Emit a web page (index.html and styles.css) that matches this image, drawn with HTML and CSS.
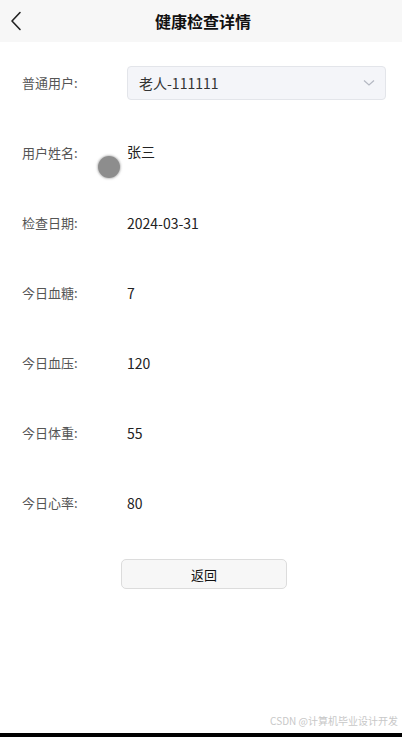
FILE: index.html
```html
<!DOCTYPE html>
<html lang="zh">
<head>
<meta charset="utf-8">
<link rel="stylesheet" href="styles.css">
</head>
<body>
<div class="page">
  <header class="nav">
    <svg class="back" width="12" height="20" viewBox="0 0 12 20"><path d="M10 1.5 L2 10 L10 18.5" fill="none" stroke="#222" stroke-width="1.6" stroke-linecap="round" stroke-linejoin="round"/></svg>
    <h1 class="title">健康检查详情</h1>
  </header>
  <main class="form">
    <div class="row">
      <span class="label">普通用户:</span>
      <div class="select"><span>老人-111111</span>
        <svg width="12" height="8" viewBox="0 0 12 8"><path d="M1 1.5 L6 6 L11 1.5" fill="none" stroke="#b4b8c2" stroke-width="1.2"/></svg>
      </div>
    </div>
    <div class="row"><span class="label">用户姓名:</span><span class="value up">张三</span></div>
    <div class="row"><span class="label">检查日期:</span><span class="value">2024-03-31</span></div>
    <div class="row"><span class="label">今日血糖:</span><span class="value">7</span></div>
    <div class="row"><span class="label">今日血压:</span><span class="value">120</span></div>
    <div class="row"><span class="label">今日体重:</span><span class="value">55</span></div>
    <div class="row"><span class="label">今日心率:</span><span class="value">80</span></div>
    <div class="actions"><button class="btn">返回</button></div>
  </main>
  <div class="watermark">CSDN @计算机毕业设计开发</div>
  <div class="touch"></div>
</div>
</body>
</html>
```
FILE: styles.css
```css
* { box-sizing: border-box; }
html, body { margin: 0; padding: 0; }
body {
  font-family: "Noto Sans CJK SC", "Noto Sans", sans-serif;
  background: #fff;
  color: #222;
}
.page {
  position: relative;
  width: 402px;
  height: 737px;
  border-bottom: 4px solid #000;
  overflow: hidden;
  display: flex;
  flex-direction: column;
}
.nav {
  height: 42px;
  background: #f7f7f7;
  display: flex;
  align-items: center;
  justify-content: center;
  position: relative;
}
.back { position: absolute; left: 10px; top: 11px; }
.title {
  margin: 0 0 0 4px;
  font-size: 16px;
  font-weight: 700;
  color: #111;
  line-height: 1;
}
.form {
  display: flex;
  flex-direction: column;
  padding: 24px 16px 0 22px;
}
.row {
  height: 70px;
  display: flex;
  align-items: flex-start;
}
.label {
  width: 105px;
  font-size: 13px;
  color: #555;
  line-height: 34px;
}
.value {
  font-size: 14px;
  color: #222;
  line-height: 34px;
}
.value.up { line-height: 30px; }
.select {
  width: 259px;
  height: 34px;
  background: #f4f5f9;
  border: 1px solid #e3e5ea;
  border-radius: 4px;
  display: flex;
  align-items: center;
  justify-content: space-between;
  padding: 0 10px 0 11px;
  font-size: 14px;
  color: #333;
}
.actions {
  display: flex;
  justify-content: center;
  margin-top: 3px;
}
.btn {
  width: 166px;
  height: 30px;
  background: #f7f7f7;
  border: 1px solid #dcdcdc;
  border-radius: 5px;
  font-family: inherit;
  font-size: 13px;
  color: #111;
}
.watermark {
  margin-top: auto;
  align-self: flex-end;
  padding: 0 4px 5px 0;
  font-size: 10px;
  color: #c8c8c8;
}
.touch {
  position: absolute;
  left: 98px;
  top: 156px;
  width: 22px;
  height: 22px;
  border-radius: 50%;
  background: #8d8d8d;
  box-shadow: 0 0 2px 1px rgba(140,140,140,0.5);
}
```
